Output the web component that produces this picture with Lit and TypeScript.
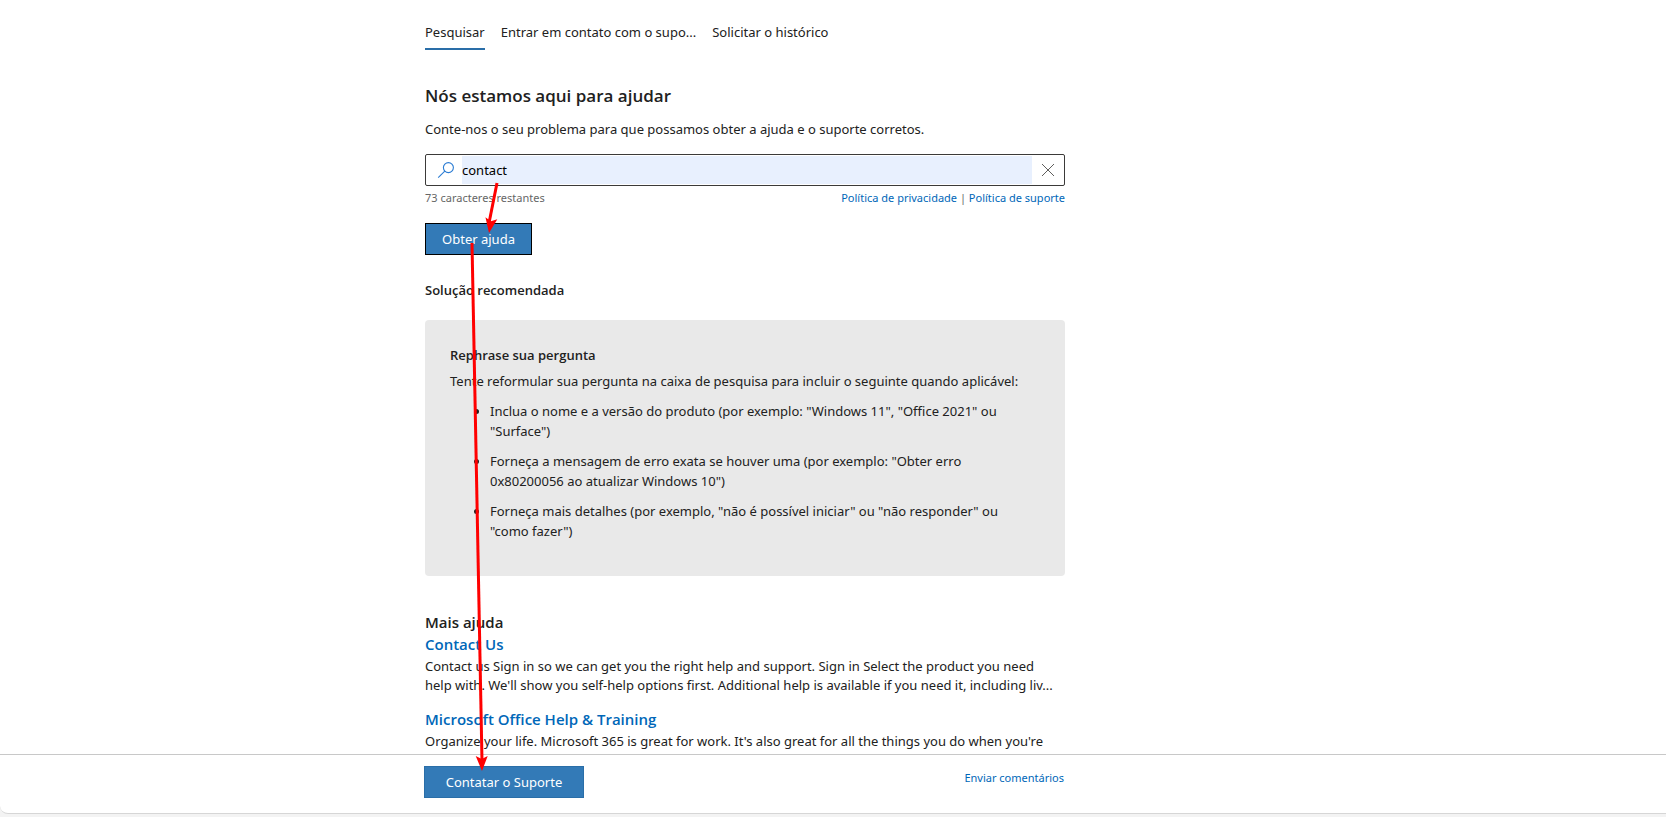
import { LitElement, html, css, svg } from "lit";
import { customElement, state } from "lit/decorators.js";

const MAX_LENGTH = 80;

const tabs = ["Pesquisar", "Entrar em contato com o supo...", "Solicitar o histórico"];

const tips = [
  ['Inclua o nome e a versão do produto (por exemplo: "Windows 11", "Office 2021" ou', '"Surface")'],
  ['Forneça a mensagem de erro exata se houver uma (por exemplo: "Obter erro', '0x80200056 ao atualizar Windows 10")'],
  ['Forneça mais detalhes (por exemplo, "não é possível iniciar" ou "não responder" ou', '"como fazer")'],
];

const results = [
  {
    title: "Contact Us",
    lines: [
      "Contact us Sign in so we can get you the right help and support. Sign in Select the product you need",
      "help with. We'll show you self-help options first. Additional help is available if you need it, including liv...",
    ],
  },
  {
    title: "Microsoft Office Help & Training",
    lines: ["Organize your life. Microsoft 365 is great for work. It's also great for all the things you do when you're"],
  },
];

@customElement("app-root")
export class AppRoot extends LitElement {
  @state() private query = "contact";
  @state() private active = 0;

  static styles = css`
    :host {
      display: block;
      position: relative;
      height: 100vh;
      overflow: hidden;
      box-sizing: border-box;
      padding-bottom: 3px;
      background: #f3f3f3;
      color: #212121;
      font: 13px/20px "Noto Sans", "Open Sans", sans-serif;
    }
    * { box-sizing: border-box; }
    h1, h2, h3, p, ul { margin: 0; padding: 0; }
    h1, h2, h3 { font-family: "Open Sans", "Noto Sans", sans-serif; }
    button, input { font: inherit; }
    a { color: #0067b8; text-decoration: none; }
    .card {
      display: flex;
      flex-direction: column;
      height: 100%;
      background: #fff;
      border-bottom: 1px solid #d6d6d6;
      border-bottom-left-radius: 8px;
    }
    .track {
      display: flex;
      justify-content: center;
      padding: 0 176px 0 0;
    }
    .column { width: 640px; max-width: 100%; }
    .scroll { flex: 1; min-height: 0; overflow: hidden; }
    .tabs { display: flex; gap: 16px; padding-top: 16px; }
    .tab {
      padding: 6px 0 7px;
      height: 34px;
      border: 0;
      border-bottom: 2px solid transparent;
      background: none;
      color: inherit;
      white-space: nowrap;
    }
    .tab.active { border-color: #2a6ea8; }
    h1 { margin-top: 32px; font-size: 17px; line-height: 28px; font-weight: 600; }
    .intro { margin-top: 9px; }
    .search {
      display: flex;
      height: 32px;
      margin-top: 15px;
      padding: 1px;
      border: 1px solid #3b3a39;
      border-radius: 2px;
    }
    .lens { width: 35px; flex: none; padding: 5px 0 0 10px; }
    .lens svg, .clear svg { display: block; }
    .search input {
      flex: 1;
      min-width: 0;
      border: 0;
      padding: 0;
      outline: 0;
      background: #e8f0fe;
      color: #000;
    }
    .clear { width: 31px; border: 0; padding: 0 0 0 9px; background: none; }
    .meta {
      display: flex;
      justify-content: space-between;
      margin-top: 4px;
      font-size: 11px;
      line-height: 16px;
      color: #666;
    }
    .button {
      height: 32px;
      border: 1px solid #2a6ea8;
      padding: 0 16px;
      background: #337ab7;
      color: #fff;
      line-height: 20px;
      white-space: nowrap;
    }
    .help { display: block; width: 107px; margin-top: 17px; border-color: #000; }
    h2 { margin-top: 25px; font-size: 13px; line-height: 20px; font-weight: 600; }
    .panel {
      height: 256px;
      margin-top: 20px;
      padding: 25px;
      border-radius: 4px;
      background: #e9e9e9;
    }
    .panel h3 { font-size: 13px; line-height: 20px; font-weight: 600; }
    .panel p { margin-top: 6px; }
    .panel ul { margin-top: 10px; padding-left: 40px; }
    .panel li { margin-bottom: 10px; }
    .line { display: block; white-space: nowrap; }
    .more { margin-top: 35px; font-size: 15px; line-height: 22px; }
    .result { margin-bottom: 13px; }
    .result h3 { font-size: 15px; line-height: 22px; font-weight: 600; }
    .result p { margin-top: 2px; line-height: 19px; }
    .footer { height: 59px; padding: 11px 178px 0 0; border-top: 1px solid #c8c8c8; }
    .footer .column { display: flex; justify-content: space-between; align-items: flex-start; }
    .contact { width: 160px; }
    .feedback { margin-top: 4px; font-size: 11px; line-height: 16px; }
    .marks { position: absolute; inset: 0; pointer-events: none; }
    .marks svg { display: block; overflow: visible; }
  `;

  private arrow(x1: number, y1: number, x2: number, y2: number) {
    const angle = (Math.atan2(y2 - y1, x2 - x1) * 180) / Math.PI;
    return svg`
      <line x1=${x1} y1=${y1} x2=${x2} y2=${y2 - 10} stroke="#f00" stroke-width="3" />
      <path d="M0 0L-15 -6L-12 0L-15 6Z" fill="#f00" transform="translate(${x2} ${y2}) rotate(${angle})" />`;
  }

  render() {
    return html`
      <div class="card">
        <main class="scroll track">
          <div class="column">
            <nav class="tabs">
              ${tabs.map(
                (label, i) => html`<button
                  class="tab ${i === this.active ? "active" : ""}"
                  @click=${() => (this.active = i)}
                >${label}</button>`
              )}
            </nav>
            <h1>Nós estamos aqui para ajudar</h1>
            <p class="intro">Conte-nos o seu problema para que possamos obter a ajuda e o suporte corretos.</p>
            <div class="search">
              <label class="lens" for="query" aria-label="Pesquisar">
                <svg width="18" height="18" viewBox="0 0 18 18" fill="none" stroke="#2b7cd3" stroke-width="1.1">
                  <circle cx="11.4" cy="6.6" r="5" />
                  <path d="M7.8 10.2L1.2 16.6" />
                </svg>
              </label>
              <input
                id="query"
                type="text"
                maxlength=${MAX_LENGTH}
                .value=${this.query}
                @input=${(e: Event) => (this.query = (e.target as HTMLInputElement).value)}
              />
              <button class="clear" aria-label="Limpar" @click=${() => (this.query = "")}>
                <svg width="14" height="14" viewBox="0 0 14 14" stroke="#605e5c" stroke-width="1">
                  <path d="M1 1L13 13M13 1L1 13" />
                </svg>
              </button>
            </div>
            <div class="meta">
              <span>${MAX_LENGTH - this.query.length} caracteres restantes</span>
              <span><a href="#privacidade">Política de privacidade</a> | <a href="#suporte">Política de suporte</a></span>
            </div>
            <button class="button help">Obter ajuda</button>
            <h2>Solução recomendada</h2>
            <section class="panel">
              <h3>Rephrase sua pergunta</h3>
              <p>Tente reformular sua pergunta na caixa de pesquisa para incluir o seguinte quando aplicável:</p>
              <ul>
                ${tips.map((tip) => html`<li>${tip.map((line) => html`<span class="line">${line}</span>`)}</li>`)}
              </ul>
            </section>
            <h2 class="more">Mais ajuda</h2>
            ${results.map(
              (r) => html`<article class="result">
                <h3><a href="#resultado">${r.title}</a></h3>
                <p>${r.lines.map((line) => html`<span class="line">${line}</span>`)}</p>
              </article>`
            )}
          </div>
        </main>
        <footer class="footer track">
          <div class="column">
            <button class="button contact">Contatar o Suporte</button>
            <a class="feedback" href="#comentarios">Enviar comentários</a>
          </div>
        </footer>
      </div>
      <div class="marks track" aria-hidden="true">
        <div class="column">
          <svg width="640" height="800">
            ${this.arrow(72, 183, 64, 233)} ${this.arrow(47, 243, 57, 771)}
          </svg>
        </div>
      </div>
    `;
  }
}
